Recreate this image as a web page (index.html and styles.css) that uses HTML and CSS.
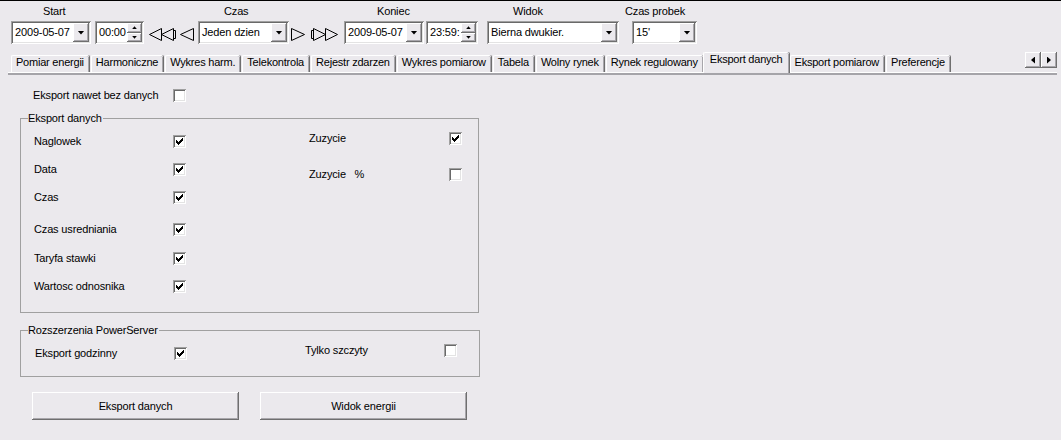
FILE: index.html
```html
<!DOCTYPE html>
<html lang="pl">
<head>
<meta charset="utf-8">
<title>Eksport danych</title>
<link rel="stylesheet" href="styles.css">
</head>
<body>
<div class="app">
  <header class="toolbar">
    <div class="field f-start">
      <span class="lbl l-start">Start</span>
      <div class="combo sunken w-date"><span class="val">2009-05-07</span><span class="drop raised"><i class="tri-down"></i></span></div>
    </div>
    <div class="spin sunken spin1"><span class="val">00:00</span><span class="spin-btns"><span class="raised"><i class="tri-up-s"></i></span><span class="raised"><i class="tri-down-s"></i></span></span></div>
    <div class="nav nav-l">
      <svg class="ic-dbl" width="28" height="13" viewBox="0 0 28 13"><polygon points="0.5,6.5 12.5,0.5 12.5,12.5" fill="none" stroke="#000"/><polygon points="12.5,6.5 24.5,0.5 24.5,12.5" fill="none" stroke="#000"/><polyline points="24.5,2.5 26.5,2.5 26.5,10.5 24.5,10.5" fill="none" stroke="#000"/></svg>
      <svg class="ic-sgl" width="14" height="13" viewBox="0 0 14 13"><polygon points="0.5,6.5 13.5,0.5 13.5,12.5" fill="none" stroke="#000"/></svg>
    </div>
    <div class="field f-czas">
      <span class="lbl l-czas">Czas</span>
      <div class="combo sunken w-czas"><span class="val">Jeden dzien</span><span class="drop raised"><i class="tri-down"></i></span></div>
    </div>
    <div class="nav nav-r">
      <svg class="ic-sgl" width="14" height="13" viewBox="0 0 14 13"><polygon points="0.5,0.5 13.5,6.5 0.5,12.5" fill="none" stroke="#000"/></svg>
      <svg class="ic-dbl2" width="28" height="13" viewBox="0 0 28 13"><polyline points="3.5,2.5 1.5,2.5 1.5,10.5 3.5,10.5" fill="none" stroke="#000"/><polygon points="3.5,0.5 15.5,6.5 3.5,12.5" fill="none" stroke="#000"/><polygon points="15.5,0.5 27.5,6.5 15.5,12.5" fill="none" stroke="#000"/></svg>
    </div>
    <div class="field f-koniec">
      <span class="lbl l-koniec">Koniec</span>
      <div class="combo sunken w-date"><span class="val">2009-05-07</span><span class="drop raised"><i class="tri-down"></i></span></div>
    </div>
    <div class="spin sunken spin2"><span class="val">23:59:</span><span class="spin-btns"><span class="raised"><i class="tri-up-s"></i></span><span class="raised"><i class="tri-down-s"></i></span></span></div>
    <div class="field f-widok">
      <span class="lbl l-widok">Widok</span>
      <div class="combo sunken w-widok"><span class="val">Bierna dwukier.</span><span class="drop raised"><i class="tri-down"></i></span></div>
    </div>
    <div class="field f-probek">
      <span class="lbl l-probek">Czas probek</span>
      <div class="combo sunken w-probek"><span class="val">15'</span><span class="drop raised"><i class="tri-down"></i></span></div>
    </div>
  </header>

  <nav class="tabs">
    <span class="tab">Pomiar energii</span>
    <span class="tab">Harmoniczne</span>
    <span class="tab">Wykres harm.</span>
    <span class="tab">Telekontrola</span>
    <span class="tab">Rejestr zdarzen</span>
    <span class="tab">Wykres pomiarow</span>
    <span class="tab">Tabela</span>
    <span class="tab">Wolny rynek</span>
    <span class="tab">Rynek regulowany</span>
    <span class="tab active">Eksport danych</span>
    <span class="tab">Eksport pomiarow</span>
    <span class="tab">Preferencje</span>
    <span class="tab-scroll"><span class="raised sbtn"><i class="tri-left"></i></span><span class="raised sbtn"><i class="tri-right"></i></span></span>
  </nav>

  <main class="panel">
    <div class="panel-inner">
      <div class="opt opt-top"><span class="olbl">Eksport nawet bez danych</span><span class="chk sunken"></span></div>

      <section class="group g1">
        <span class="legend">Eksport danych</span>
        <div class="gbody">
          <div class="col col-l">
            <div class="opt"><span class="olbl">Naglowek</span><span class="chk sunken on"><svg width="7" height="7" viewBox="0 0 7 7"><path d="M0 2h1v3H0zM1 3h1v3H1zM2 4h1v3H2zM3 3h1v3H3zM4 2h1v3H4zM5 1h1v3H5zM6 0h1v3H6z"/></svg></span></div>
            <div class="opt"><span class="olbl">Data</span><span class="chk sunken on"><svg width="7" height="7" viewBox="0 0 7 7"><path d="M0 2h1v3H0zM1 3h1v3H1zM2 4h1v3H2zM3 3h1v3H3zM4 2h1v3H4zM5 1h1v3H5zM6 0h1v3H6z"/></svg></span></div>
            <div class="opt"><span class="olbl">Czas</span><span class="chk sunken on"><svg width="7" height="7" viewBox="0 0 7 7"><path d="M0 2h1v3H0zM1 3h1v3H1zM2 4h1v3H2zM3 3h1v3H3zM4 2h1v3H4zM5 1h1v3H5zM6 0h1v3H6z"/></svg></span></div>
            <div class="opt sp-lg"><span class="olbl">Czas usredniania</span><span class="chk sunken on"><svg width="7" height="7" viewBox="0 0 7 7"><path d="M0 2h1v3H0zM1 3h1v3H1zM2 4h1v3H2zM3 3h1v3H3zM4 2h1v3H4zM5 1h1v3H5zM6 0h1v3H6z"/></svg></span></div>
            <div class="opt sp-sm"><span class="olbl">Taryfa stawki</span><span class="chk sunken on"><svg width="7" height="7" viewBox="0 0 7 7"><path d="M0 2h1v3H0zM1 3h1v3H1zM2 4h1v3H2zM3 3h1v3H3zM4 2h1v3H4zM5 1h1v3H5zM6 0h1v3H6z"/></svg></span></div>
            <div class="opt"><span class="olbl">Wartosc odnosnika</span><span class="chk sunken on"><svg width="7" height="7" viewBox="0 0 7 7"><path d="M0 2h1v3H0zM1 3h1v3H1zM2 4h1v3H2zM3 3h1v3H3zM4 2h1v3H4zM5 1h1v3H5zM6 0h1v3H6z"/></svg></span></div>
          </div>
          <div class="col col-r">
            <div class="opt"><span class="olbl">Zuzycie</span><span class="chk sunken on"><svg width="7" height="7" viewBox="0 0 7 7"><path d="M0 2h1v3H0zM1 3h1v3H1zM2 4h1v3H2zM3 3h1v3H3zM4 2h1v3H4zM5 1h1v3H5zM6 0h1v3H6z"/></svg></span></div>
            <div class="opt"><span class="olbl">Zuzycie&nbsp;&nbsp;&nbsp;%</span><span class="chk sunken"></span></div>
          </div>
        </div>
      </section>

      <section class="group g2">
        <span class="legend">Rozszerzenia PowerServer</span>
        <div class="gbody">
          <div class="opt opt-godz"><span class="olbl">Eksport godzinny</span><span class="chk sunken on"><svg width="7" height="7" viewBox="0 0 7 7"><path d="M0 2h1v3H0zM1 3h1v3H1zM2 4h1v3H2zM3 3h1v3H3zM4 2h1v3H4zM5 1h1v3H5zM6 0h1v3H6z"/></svg></span></div>
          <div class="opt opt-szczyt"><span class="olbl">Tylko szczyty</span><span class="chk sunken"></span></div>
        </div>
      </section>

      <div class="actions">
        <button class="btn raised" type="button">Eksport danych</button>
        <button class="btn raised" type="button">Widok energii</button>
      </div>
    </div>
  </main>
</div>
</body>
</html>
```

FILE: styles.css
```css
* { box-sizing: border-box; }
html, body { margin: 0; padding: 0; }
body {
  width: 1061px;
  height: 440px;
  overflow: hidden;
  background: #ebe9ed;
  font-family: "Liberation Sans", Arial, sans-serif;
  font-size: 11px;
  letter-spacing: -0.15px;
  color: #000;
}
.app {
  height: 440px;
  border-top: 1px solid #000;
}

/* ---------- generic 3D looks ---------- */
.sunken {
  background: #fff;
  box-shadow: inset 1px 1px #a0a0a0, inset -1px -1px #fff, inset 2px 2px #696969, inset -2px -2px #e3e3e3;
}
.raised {
  background: #ebe9ed;
  box-shadow: inset -1px -1px #6f6f6f, inset 1px 1px #fff, inset -2px -2px #a8a6ab;
}

/* ---------- toolbar ---------- */
.toolbar {
  display: flex;
  align-items: flex-end;
  padding: 4px 0 0 11px;
}
.field { display: flex; flex-direction: column; }
.lbl {
  height: 13px;
  line-height: 13px;
  margin-bottom: 3px;
  white-space: nowrap;
}
.l-start { margin-left: 32px; }
.l-czas { margin-left: 26px; }
.l-koniec { margin-left: 33px; }
.l-widok { margin-left: 26px; }
.l-probek { margin-left: -7px; }

.combo, .spin {
  height: 23px;
  padding: 2px;
  display: flex;
}
.combo .val, .spin .val {
  flex: 1;
  padding-left: 2px;
  line-height: 19px;
  white-space: nowrap;
  overflow: hidden;
}
.drop {
  width: 16px;
  display: flex;
  align-items: center;
  justify-content: center;
}
.tri-down {
  display: block;
  width: 7px;
  height: 4px;
  background: #000;
  clip-path: polygon(0 0, 100% 0, 50% 100%);
}
.w-date { width: 80px; }
.w-czas { width: 91px; }
.w-widok { width: 132px; }
.w-probek { width: 65px; }

.f-czas { margin-left: 4px; }
.f-koniec { margin-left: 6px; }
.f-widok { margin-left: 9px; }
.f-probek { margin-left: 13px; }

.spin1 { margin-left: 4px; width: 49px; }
.spin2 { margin-left: 2px; width: 52px; }
.spin-btns {
  width: 15px;
  display: flex;
  flex-direction: column;
}
.spin-btns .raised {
  flex: 1;
  display: flex;
  align-items: center;
  justify-content: center;
}
.tri-up-s, .tri-down-s {
  display: block;
  width: 5px;
  height: 3px;
  background: #000;
}
.tri-up-s { clip-path: polygon(50% 0, 100% 100%, 0 100%); }
.tri-down-s { clip-path: polygon(0 0, 100% 0, 50% 100%); }

.nav {
  display: flex;
  align-items: center;
  margin-bottom: 3px;
}
.nav svg { display: block; }
.nav-l { margin-left: 5px; gap: 3px; }
.nav-r { margin-left: 2px; gap: 5px; }

/* ---------- tabs ---------- */
.tabs {
  display: flex;
  align-items: flex-end;
  height: 21px;
  margin-top: 8px;
  margin-bottom: -1px;
  padding: 0 4px 0 11px;
  letter-spacing: -0.22px;
}
.tab {
  height: 17px;
  margin: 0 2px 1px 0;
  padding: 0 5px 4px 4px;
  line-height: 12px;
  white-space: nowrap;
  border-top: 1px solid #fff;
  border-left: 1px solid #fff;
  border-radius: 2px 2px 0 0;
  box-shadow: inset -1px 0 #a8a6ab, 1px 0 #6f6f6f;
}
.tab.active {
  position: relative;
  z-index: 1;
  height: 21px;
  margin: 0 0 0 -2px;
  padding: 0 6px 8px 6px;
  background: #ebe9ed;
}
.tab.active + .tab { margin-left: 1px; }
.tab-scroll {
  margin-left: auto;
  align-self: flex-start;
  display: flex;
}
.sbtn {
  width: 16px;
  height: 16px;
  display: flex;
  align-items: center;
  justify-content: center;
}
.tri-left, .tri-right {
  display: block;
  width: 4px;
  height: 7px;
  background: #000;
}
.tri-left { clip-path: polygon(100% 0, 100% 100%, 0 50%); }
.tri-right { clip-path: polygon(0 0, 100% 50%, 0 100%); }

/* ---------- panel ---------- */
.panel {
  margin: 0 4px 0 8px;
  border-top: 1px solid #fff;
}
.panel-inner {
  border-top: 2px solid #a5a4a9;
  padding-top: 14px;
}
.opt {
  display: flex;
  align-items: center;
  line-height: 13px;
  white-space: nowrap;
}
.olbl { width: 139px; }
.chk {
  width: 13px;
  height: 13px;
  display: flex;
  align-items: center;
  justify-content: center;
  flex: none;
}
.chk svg { display: block; shape-rendering: crispEdges; }
.chk path { fill: #000; }

.opt-top { margin-left: 25px; }
.opt-top .olbl { width: 140px; }

.group {
  margin: 16px 0 0 12px;
  width: 459px;
  border: 1px solid #a0a0a0;
}
.legend {
  display: block;
  width: max-content;
  margin: -7px 0 0 7px;
  padding-right: 1px;
  line-height: 13px;
  background: #ebe9ed;
}
.gbody {
  display: flex;
  align-items: flex-start;
}
.col { display: flex; flex-direction: column; }
.col-l {
  padding: 10px 0 19px 13px;
  gap: 15px;
}
.col-l .sp-lg { margin-top: 4px; }
.col-l .sp-sm { margin-top: 1px; }
.col-r {
  margin-left: 123px;
  padding-top: 7px;
  gap: 23px;
}
.col-r .olbl { width: 140px; }

.g2 {
  margin-top: 17px;
  width: 460px;
}
.g2 .gbody { padding: 10px 0 16px 14px; }
.opt-szczyt {
  margin: -3px 0 0 118px;
}

.actions {
  display: flex;
  gap: 21px;
  margin: 15px 0 0 24px;
}
.btn {
  width: 207px;
  height: 28px;
  border: 0;
  padding: 0;
  font: inherit;
  letter-spacing: inherit;
  color: #000;
}
```
